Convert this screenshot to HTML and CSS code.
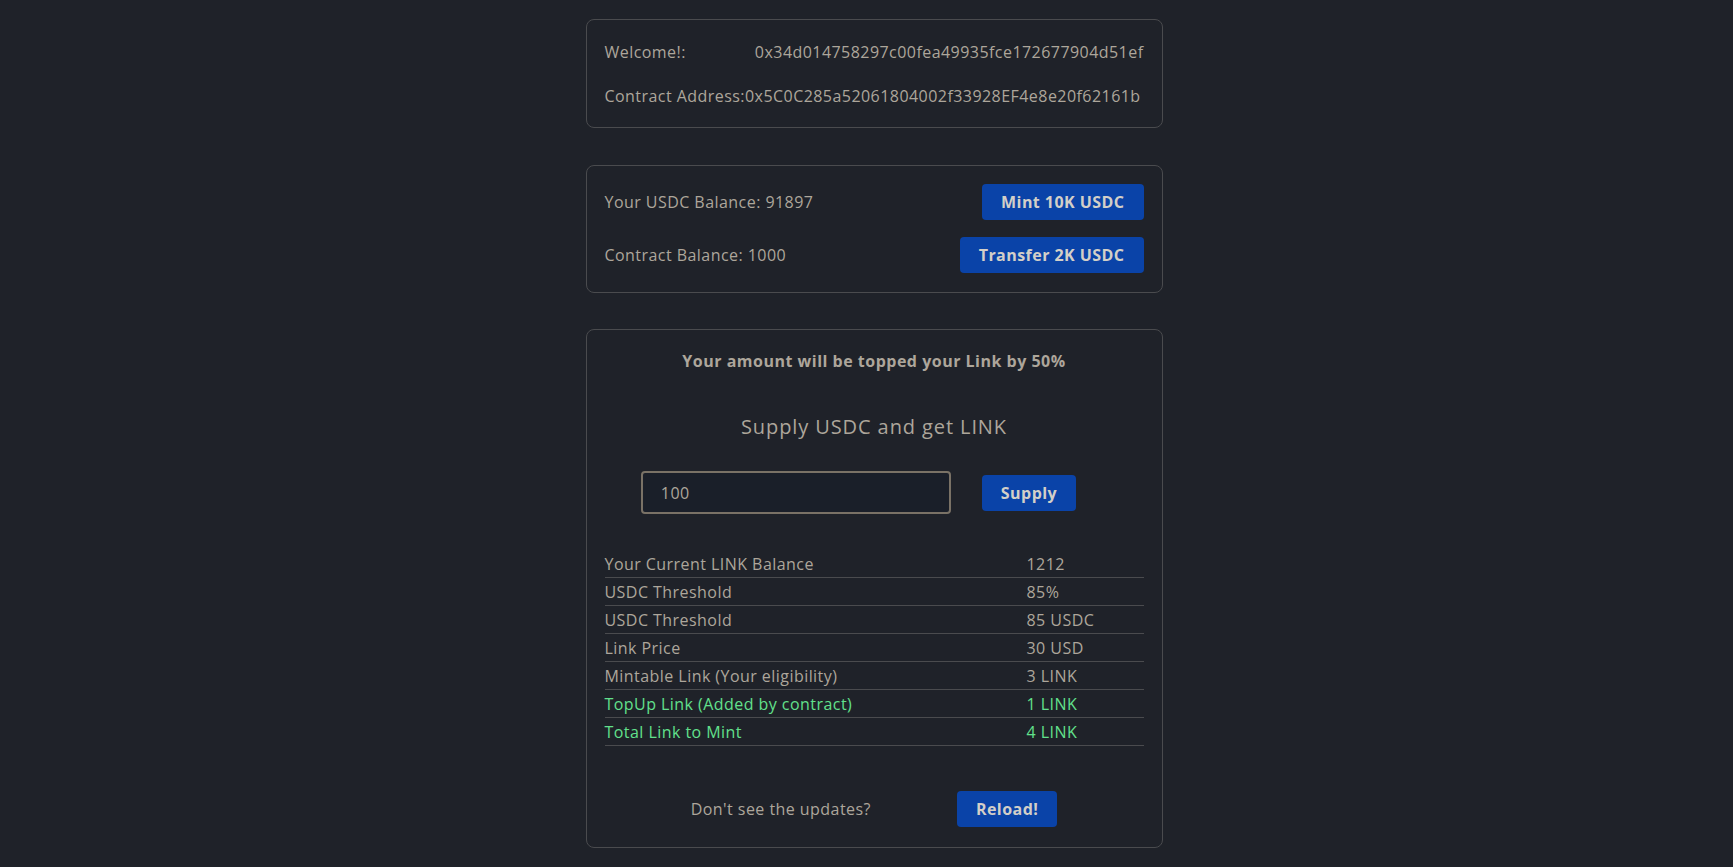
FILE: index.html
```html
<!DOCTYPE html>
<html lang="en">
<head>
<meta charset="utf-8">
<title>USDC / LINK</title>
<link rel="stylesheet" href="styles.css">
</head>
<body>
<main class="page">
  <section class="card card-info">
    <div class="row">
      <span>Welcome!:</span>
      <span>0x34d014758297c00fea49935fce172677904d51ef</span>
    </div>
    <div class="row">
      <span>Contract Address:0x5C0C285a52061804002f33928EF4e8e20f62161b</span>
    </div>
  </section>

  <section class="card card-balance">
    <div class="row row-btn">
      <span>Your USDC Balance: 91897</span>
      <button class="btn">Mint 10K USDC</button>
    </div>
    <div class="row row-btn">
      <span>Contract Balance: 1000</span>
      <button class="btn">Transfer 2K USDC</button>
    </div>
  </section>

  <section class="card card-supply">
    <p class="note">Your amount will be topped your Link by 50%</p>
    <h2 class="title">Supply USDC and get LINK</h2>
    <div class="supply-row">
      <input class="amount" type="text" value="100">
      <button class="btn btn-supply">Supply</button>
    </div>
    <div class="stats">
      <div class="stat"><span>Your Current LINK Balance</span><span>1212</span></div>
      <div class="stat"><span>USDC Threshold</span><span>85%</span></div>
      <div class="stat"><span>USDC Threshold</span><span>85 USDC</span></div>
      <div class="stat"><span>Link Price</span><span>30 USD</span></div>
      <div class="stat"><span>Mintable Link (Your eligibility)</span><span>3 LINK</span></div>
      <div class="stat stat-green"><span>TopUp Link (Added by contract)</span><span>1 LINK</span></div>
      <div class="stat stat-green"><span>Total Link to Mint</span><span>4 LINK</span></div>
    </div>
    <div class="reload-row">
      <span class="muted">Don't see the updates?</span>
      <button class="btn">Reload!</button>
    </div>
  </section>
</main>
</body>
</html>
```

FILE: styles.css
```css
* { box-sizing: border-box; }

html, body {
  margin: 0;
  padding: 0;
  background: #1f2229;
}

body {
  font-family: "Open Sans", "Noto Sans", sans-serif;
  font-size: 16px;
  letter-spacing: 0.45px;
  line-height: 24px;
  color: #ada69b;
}

.page {
  display: flex;
  flex-direction: column;
  align-items: center;
  padding: 19px 0 0 15px;
  gap: 36.5px;
}

.card {
  width: 577px;
  border: 1px solid #4a4b4e;
  border-radius: 8px;
  background: #1f2229;
  padding: 18px;
  display: flex;
  flex-direction: column;
}

.card-info {
  padding: 20px 18px 19px;
  gap: 20px;
}

.row {
  display: flex;
  justify-content: space-between;
  align-items: center;
  white-space: nowrap;
}

.card-balance {
  padding: 18px 18px 19px;
  gap: 17px;
}

.row-btn {
  height: 36px;
}

.btn {
  font-family: "Open Sans", "Noto Sans", sans-serif;
  font-size: 16px;
  letter-spacing: 0.45px;
  font-weight: 700;
  color: #d3cfc8;
  background: #0a43a8;
  border: none;
  border-radius: 4px;
  height: 36px;
  padding: 0 19px;
  cursor: pointer;
}

.card-supply {
  padding: 19px 18px 20px;
  align-items: stretch;
}

.note {
  margin: 0;
  text-align: center;
  font-weight: 700;
  letter-spacing: 0.5px;
}

.title {
  margin: 39px 0 0;
  text-align: center;
  font-size: 20px;
  letter-spacing: 0.9px;
  line-height: 30px;
  font-weight: 400;
}

.supply-row {
  margin-top: 29px;
  display: flex;
  justify-content: center;
  align-items: center;
}

.amount {
  width: 310px;
  height: 43px;
  border: 2px solid #7a7266;
  border-radius: 4px;
  background: #1a1f29;
  color: #ada69b;
  font-family: "Open Sans", "Noto Sans", sans-serif;
  font-size: 16px;
  letter-spacing: 0.45px;
  padding: 0 18px;
  outline: none;
}

.btn-supply {
  margin-left: 31px;
  margin-right: 31px;
}

.stats {
  margin-top: 36px;
  display: flex;
  flex-direction: column;
}

.stat {
  display: grid;
  grid-template-columns: 422px 1fr;
  height: 28px;
  align-items: center;
  border-bottom: 1px solid #4a4b4e;
}

.stat-green {
  color: #62e08c;
}

.reload-row {
  margin-top: 45px;
  display: flex;
  justify-content: center;
  align-items: center;
  gap: 86px;
}
```
